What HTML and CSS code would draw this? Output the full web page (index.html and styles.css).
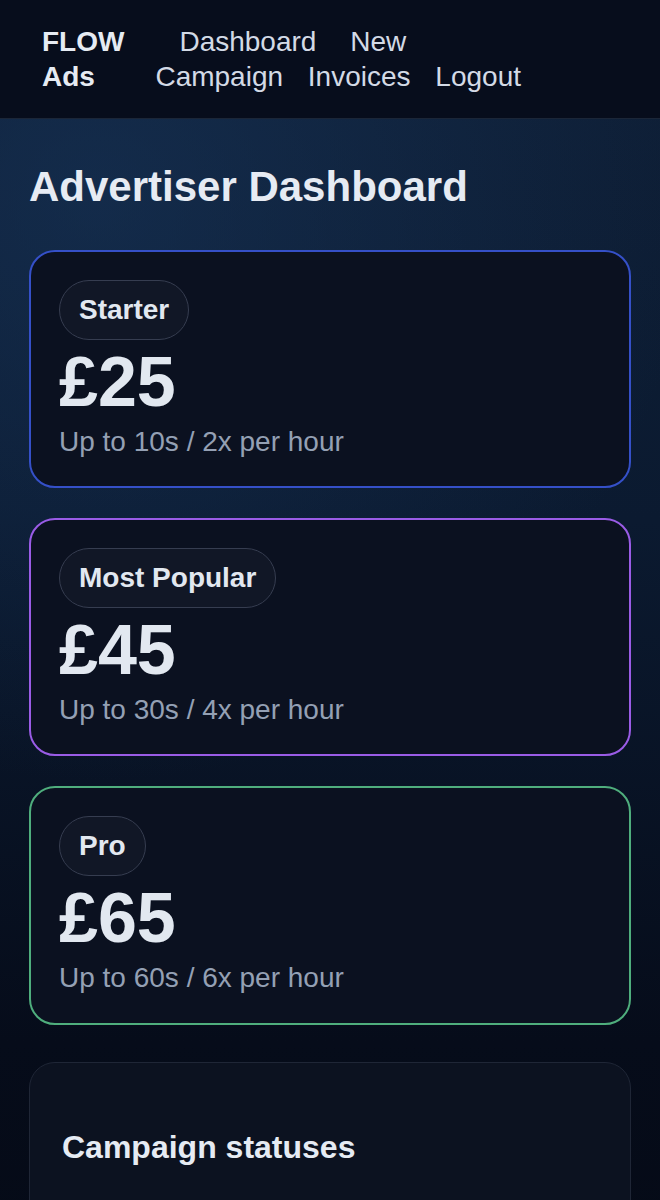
FILE: index.html
```html
<!DOCTYPE html>
<html lang="en">
<head>
  <meta charset="UTF-8">
  <meta name="viewport" content="width=device-width, initial-scale=1.0">
  <title>FLOW Ads - Advertiser Dashboard</title>
  <link rel="stylesheet" href="styles.css">
</head>
<body>

<header class="topbar">
  <div class="brand">FLOW Ads</div>
  <nav class="nav">
    <a href="#" class="nav-first">Dashboard</a>
    <a href="#">New Campaign</a>
    <a href="#">Invoices</a>
    <a href="#">Logout</a>
  </nav>
</header>

<main class="page">
  <h1>Advertiser Dashboard</h1>

  <div class="plan plan-starter">
    <span class="pill">Starter</span>
    <div class="price">£25</div>
    <div class="desc">Up to 10s / 2x per hour</div>
  </div>

  <div class="plan plan-popular">
    <span class="pill">Most Popular</span>
    <div class="price">£45</div>
    <div class="desc">Up to 30s / 4x per hour</div>
  </div>

  <div class="plan plan-pro">
    <span class="pill">Pro</span>
    <div class="price">£65</div>
    <div class="desc">Up to 60s / 6x per hour</div>
  </div>

  <section class="panel">
    <h2>Campaign statuses</h2>
  </section>
</main>

</body>
</html>
```

FILE: styles.css
```css
* {
  box-sizing: border-box;
}
html {
  background: #050a16;
}
body {
  margin: 0;
  min-height: 1200px;
  font-family: 'Liberation Sans', Arial, sans-serif;
  color: #e2e8f0;
  line-height: 1.2;
  background:
    radial-gradient(ellipse 90% 45% at 15% 15%, rgba(24, 54, 92, 0.55), rgba(24, 54, 92, 0) 100%),
    linear-gradient(180deg, #0f2038 0%, #0b1a30 40%, #060c1a 80%, #050a16 100%);
}
.topbar {
  display: flex;
  gap: 31px;
  padding: 24px 124px 24px 42px;
  background: #070d1c;
  border-bottom: 1px solid #1b2638;
  font-size: 28px;
  line-height: 35px;
}
.brand {
  width: min-content;
  font-weight: bold;
  color: #e6ebf3;
}
.nav {
  flex: 1;
  text-indent: 7px;
}
.nav a {
  margin-left: 17px;
  color: #d3dae6;
  text-decoration: none;
}
.nav a.nav-first {
  margin-right: 9px;
}
.page {
  padding: 0 29px 40px;
}
h1 {
  margin: 43px 0 38px;
  font-size: 42px;
  line-height: 50px;
  color: #e6ebf3;
}
.plan {
  display: flex;
  flex-direction: column;
  align-items: flex-start;
  margin-bottom: 30px;
  padding: 28px 28px 28px;
  background: #0b1120;
  border: 2px solid #3550c8;
  border-radius: 26px;
}
.plan-popular {
  border-color: #9a5ce6;
}
.plan-pro {
  border-color: #4fae7d;
}
.pill {
  padding: 12px 19px;
  font-size: 28px;
  font-weight: bold;
  background: #111726;
  border: 1px solid #363d50;
  border-radius: 999px;
}
.price {
  font-size: 70px;
  font-weight: bold;
  line-height: 85px;
}
.desc {
  font-size: 28px;
  color: #94a0b4;
}
.panel {
  margin-top: 37px;
  min-height: 200px;
  padding: 33px 32px;
  background: #0c1220;
  border: 1px solid #1f2636;
  border-radius: 26px;
}
.panel h2 {
  margin: 32px 0 0;
  font-size: 32px;
  color: #e6ebf3;
}
```
